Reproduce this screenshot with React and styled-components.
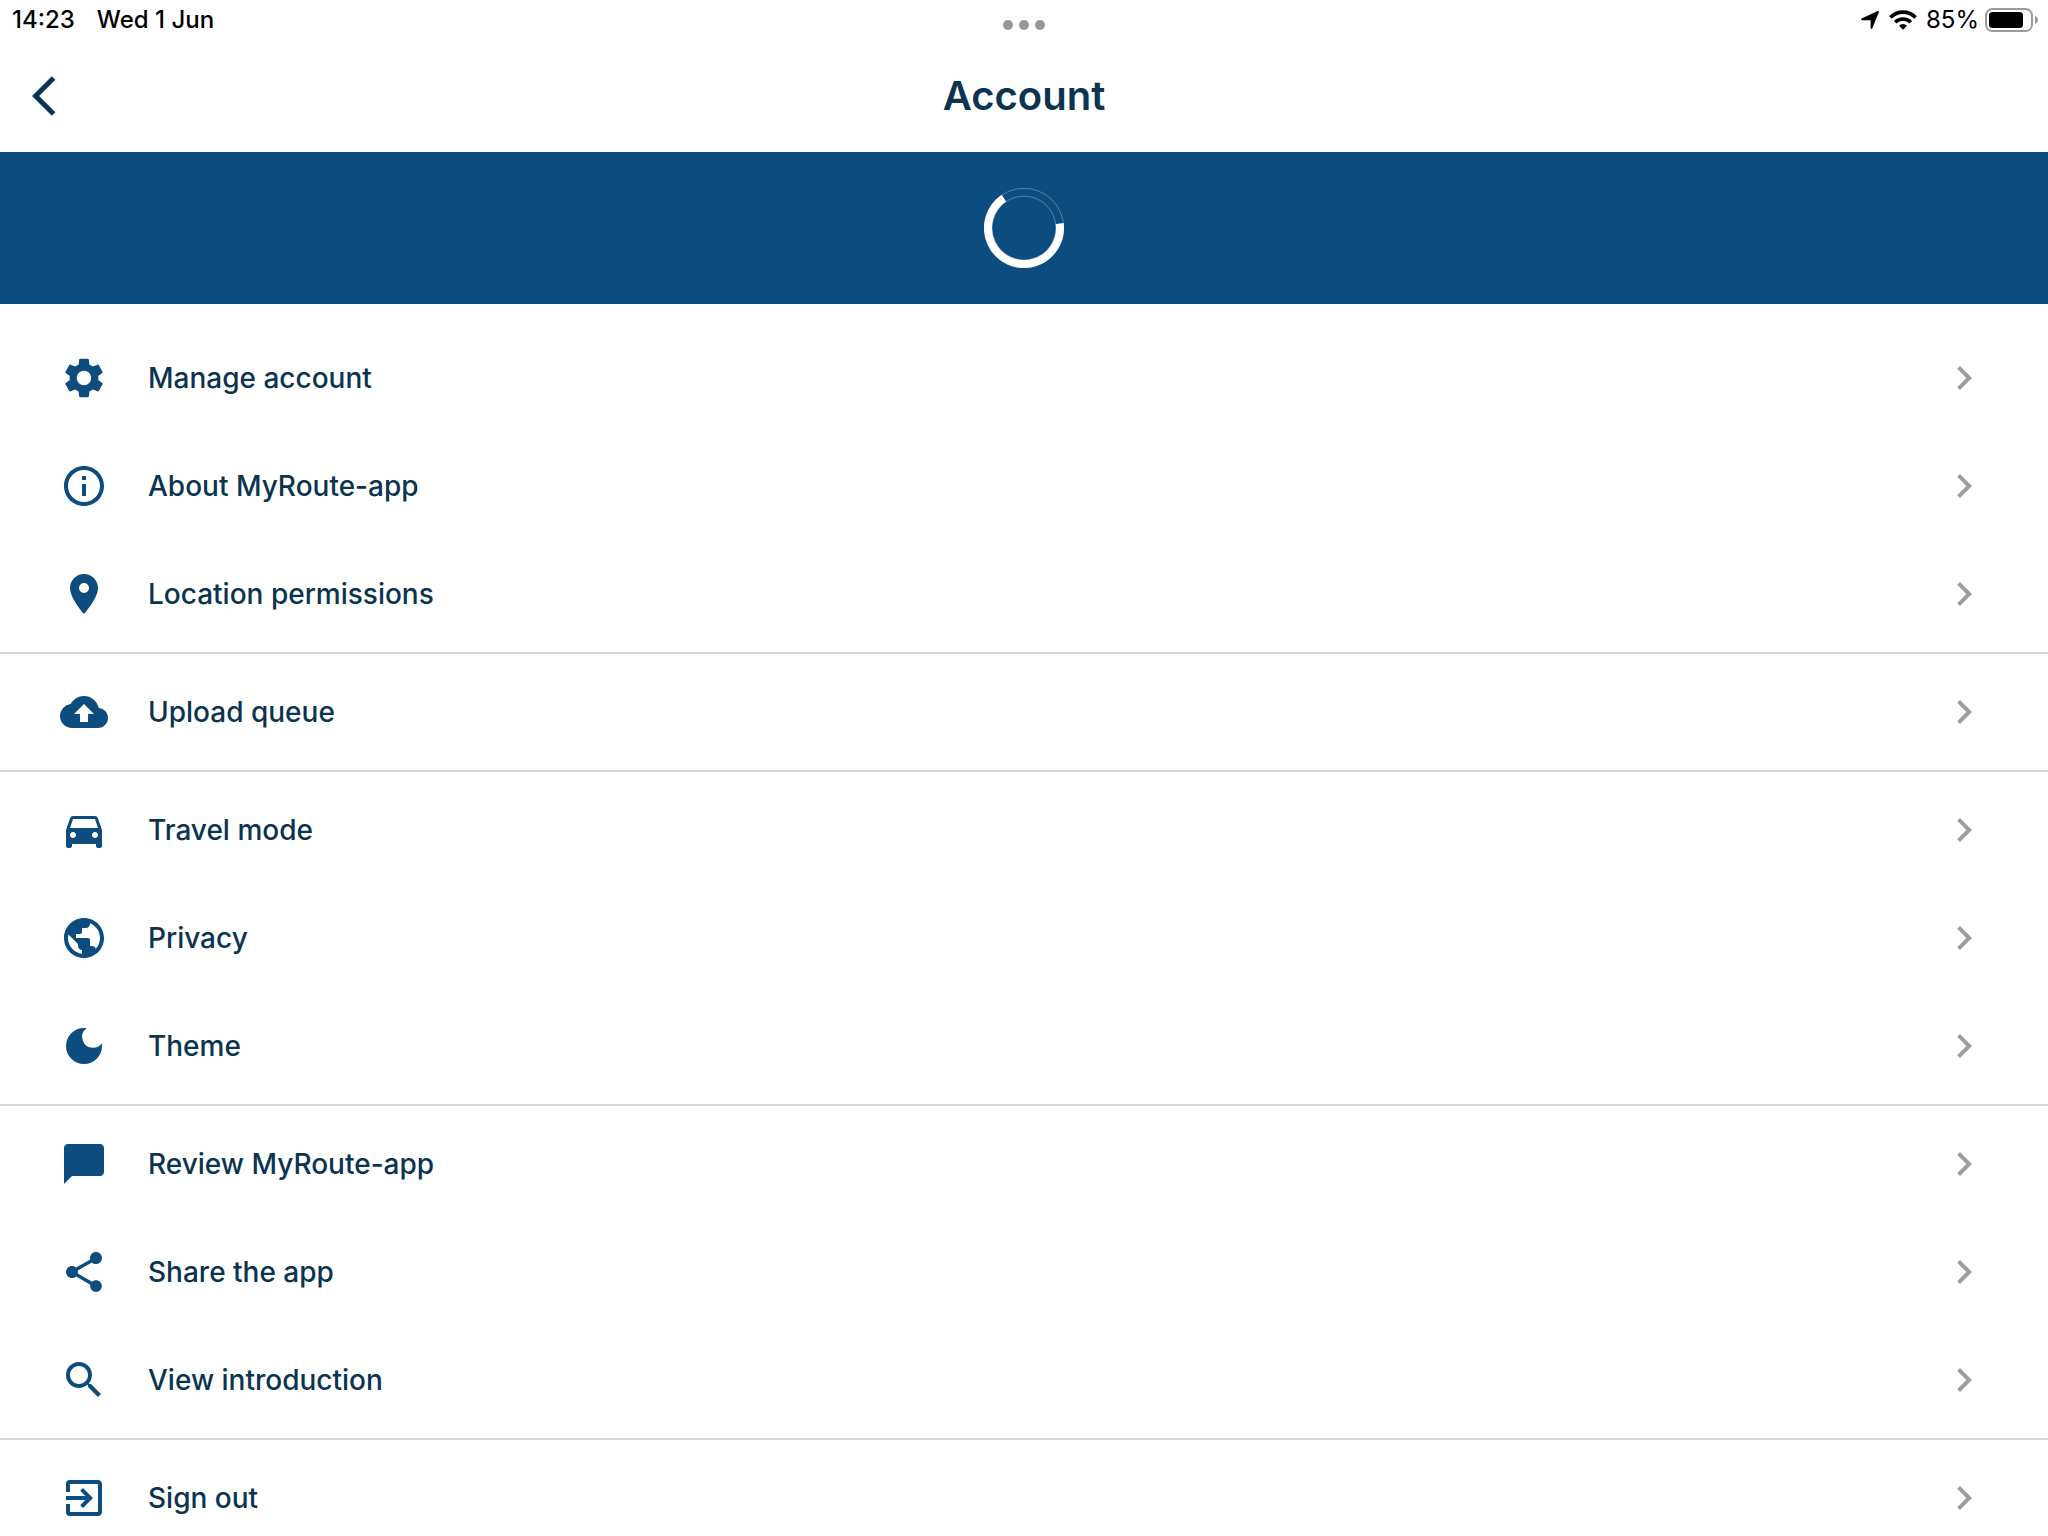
import styled, { createGlobalStyle } from "styled-components";
import {
  MdArrowBackIos,
  MdBackup,
  MdChatBubble,
  MdChevronRight,
  MdDarkMode,
  MdDirectionsCar,
  MdExitToApp,
  MdInfoOutline,
  MdLocationOn,
  MdPublic,
  MdSearch,
  MdSettings,
  MdShare,
} from "react-icons/md";

const groups = [
  [
    { label: "Manage account", icon: MdSettings },
    { label: "About MyRoute-app", icon: MdInfoOutline },
    { label: "Location permissions", icon: MdLocationOn },
  ],
  [{ label: "Upload queue", icon: MdBackup }],
  [
    { label: "Travel mode", icon: MdDirectionsCar },
    { label: "Privacy", icon: MdPublic },
    { label: "Theme", icon: MdDarkMode },
  ],
  [
    { label: "Review MyRoute-app", icon: MdChatBubble },
    { label: "Share the app", icon: MdShare },
    { label: "View introduction", icon: MdSearch },
  ],
  [{ label: "Sign out", icon: MdExitToApp }],
];

const LocationArrow = () => (
  <svg width="20" height="20" viewBox="0 0 20 20">
    <path
      d="M18 1.800L11.500 18V9.300H2z"
      stroke="#000"
      strokeWidth="1.800"
      strokeLinejoin="round"
    />
  </svg>
);

const Wifi = () => (
  <svg width="28" height="20" viewBox="0 0 28 20" fill="none" stroke="#000" strokeWidth="3.6">
    <path d="M1.4 7.4a17.8 17.8 0 0 1 25.2 0" />
    <path d="M6.2 12.2a11 11 0 0 1 15.6 0" />
    <path d="M14 19.8l-4-4.1a5.600 5.600 0 0 1 8 0z" fill="#000" stroke="none" />
  </svg>
);

const Battery = () => (
  <svg width="53" height="24" viewBox="0 0 53 24">
    <rect x="1" y="1" width="46" height="22" rx="6.5" fill="none" stroke="#9b9b9b" strokeWidth="2" />
    <rect x="4" y="4" width="34" height="16" rx="3.5" />
    <path d="M50 8c2 .6 3 2.2 3 4s-1 3.4-3 4z" fill="#9b9b9b" />
  </svg>
);

const Spinner = () => (
  <svg width="80" height="80" viewBox="0 0 80 80" fill="none" stroke="#fff" role="img" aria-label="Loading">
    <circle cx="40" cy="40" r="39.7" strokeWidth="0.5" strokeOpacity="0.6" />
    <circle cx="40" cy="40" r="31.9" strokeWidth="0.5" strokeOpacity="0.6" />
    <path d="M75.73 35.61A36 36 0 1 1 19.87 10.15" strokeWidth="8" />
  </svg>
);

const App = () => {
  const renderGroup = (items, idx) => (
    <MenuGroup key={idx}>
      {items.map(({ label, icon: Icon }) => (
        <li key={label}>
          <MenuButton type="button">
            <Icon size={48} color="#0c4c7e" />
            <MenuLabel>{label}</MenuLabel>
            <MdChevronRight size={48} color="#9e9e9e" />
          </MenuButton>
        </li>
      ))}
    </MenuGroup>
  );

  return (
    <Page>
      <GlobalStyle />
      <StatusBar>
        <StatusTime>
          <span>14:23</span>
          <span>Wed 1 Jun</span>
        </StatusTime>
        <Dots>
          <Dot />
          <Dot />
          <Dot />
        </Dots>
        <StatusIcons>
          <LocationArrow />
          <Wifi />
          <BatteryLevel>
            85%
            <Battery />
          </BatteryLevel>
        </StatusIcons>
      </StatusBar>
      <Header>
        <BackButton type="button" aria-label="Back">
          <MdArrowBackIos size={48} />
        </BackButton>
        <Title>Account</Title>
      </Header>
      <Banner>
        <Spinner />
      </Banner>
      <Menu>{groups.map(renderGroup)}</Menu>
    </Page>
  );
};

export default App;

const GlobalStyle = createGlobalStyle`
  * {
    box-sizing: border-box;
  }
  body {
    margin: 0;
    background: #fff;
    font-family: Inter, "Liberation Sans", sans-serif;
  }
  svg {
    display: block;
    flex-shrink: 0;
  }
`;

const Page = styled.div`
  display: flex;
  flex-direction: column;
  height: 100vh;
  color: #0a3450;
`;

const StatusBar = styled.div`
  display: grid;
  grid-template-columns: 1fr auto 1fr;
  align-items: center;
  flex-shrink: 0;
  height: 40px;
  padding: 0 10px;
  font-size: 24px;
  font-weight: 500;
  line-height: 40px;
  color: #000;
`;

const StatusTime = styled.div`
  display: flex;
  align-items: center;
  gap: 22px;
  padding-left: 2px;
`;

const StatusIcons = styled.div`
  display: flex;
  align-items: center;
  justify-content: flex-end;
  gap: 9px;
`;

const BatteryLevel = styled.span`
  display: flex;
  align-items: center;
  gap: 6px;
  font-weight: 400;
`;

const Dots = styled.div`
  display: flex;
  gap: 6px;
  padding-top: 10px;
`;

const Dot = styled.span`
  width: 10px;
  height: 10px;
  border-radius: 50%;
  background: #999;
`;

const Header = styled.header`
  display: grid;
  grid-template-columns: 1fr auto 1fr;
  align-items: center;
  flex-shrink: 0;
  height: 112px;
  padding: 0 32px;
`;

const BackButton = styled.button`
  justify-self: start;
  padding: 0;
  border: 0;
  background: none;
  color: inherit;
  cursor: pointer;
`;

const Title = styled.h1`
  margin: 0;
  font-size: 40px;
  font-weight: 600;
  line-height: 48px;
`;

const Banner = styled.div`
  display: flex;
  align-items: center;
  justify-content: center;
  flex-shrink: 0;
  height: 152px;
  background: #0c4c7e;
`;

const Menu = styled.nav`
  flex: 1;
  min-height: 0;
  padding-top: 16px;
  overflow-y: auto;
  scrollbar-width: none;
`;

const MenuGroup = styled.ul`
  margin: 0;
  padding: 4px 0;
  list-style: none;

  & + & {
    border-top: 2px solid #cfd8dc;
  }
`;

const MenuButton = styled.button`
  display: flex;
  align-items: center;
  gap: 40px;
  width: 100%;
  height: 108px;
  padding: 0 60px;
  border: 0;
  background: none;
  color: inherit;
  font-family: inherit;
  font-size: 28px;
  font-weight: 500;
  line-height: 36px;
  text-align: left;
  cursor: pointer;
`;

const MenuLabel = styled.span`
  flex: 1;
`;
